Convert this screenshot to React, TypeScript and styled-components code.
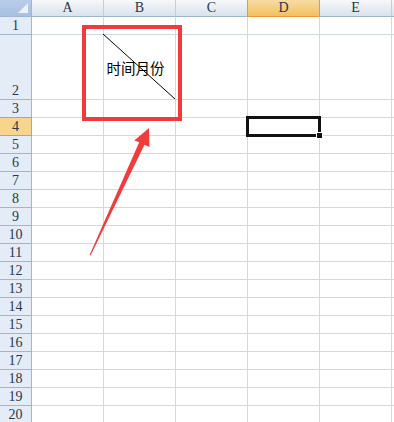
import React from "react";
import styled, { createGlobalStyle } from "styled-components";

const GlobalStyle = createGlobalStyle`
  html, body {
    margin: 0;
    padding: 0;
    background: #ffffff;
    overflow: hidden;
  }
`;

// F is only a sliver at the right edge, so its label is not drawn
const COLUMNS = ["A", "B", "C", "D", "E", "F"];
const ROW_HEIGHTS = [18, 65, ...Array(18).fill(18)];

const Sheet = styled.div`
  position: relative;
  display: grid;
  grid-template-columns: 32px repeat(6, 72px);
  grid-template-rows: 17px ${ROW_HEIGHTS.map((h) => `${h}px`).join(" ")};
  width: 394px;
  height: 422px;
  overflow: hidden;
  font-family: "Liberation Serif", "Times New Roman", serif;
  font-size: 14px;
  color: #27384a;
`;

const Corner = styled.div`
  position: relative;
  box-sizing: border-box;
  background: linear-gradient(#b9cde8, #a8c0e2);
  border-right: 1px solid #9eb6ce;
  border-bottom: 1px solid #9eb6ce;

  &::after {
    content: "";
    position: absolute;
    right: 3px;
    bottom: 3px;
    width: 0;
    height: 0;
    border-left: 10px solid transparent;
    border-bottom: 10px solid #eef2f8;
  }
`;

const ColHeader = styled.div<{ $active?: boolean }>`
  box-sizing: border-box;
  display: flex;
  align-items: flex-end;
  justify-content: center;
  padding-bottom: 1px;
  line-height: 14px;
  background: ${(p) =>
    p.$active
      ? "linear-gradient(#f9dba4, #f1c15f)"
      : "linear-gradient(#f6f8fb, #dae2ec)"};
  border-right: 1px solid ${(p) => (p.$active ? "#f29536" : "#c2cfdf")};
  border-left: ${(p) => (p.$active ? "1px solid #f29536" : "none")};
  border-bottom: 1px solid ${(p) => (p.$active ? "#f29536" : "#9eb6ce")};
  margin-left: ${(p) => (p.$active ? "-1px" : "0")};
`;

const RowHeader = styled.div<{ $active?: boolean }>`
  box-sizing: border-box;
  display: flex;
  align-items: flex-end;
  justify-content: center;
  padding-bottom: 1px;
  line-height: 14px;
  background: ${(p) => (p.$active ? "#f8d48c" : "#e4ecf7")};
  border-right: 1px solid ${(p) => (p.$active ? "#f29536" : "#9eb6ce")};
  border-bottom: 1px solid ${(p) => (p.$active ? "#f29536" : "#9eb6ce")};
  border-top: ${(p) => (p.$active ? "1px solid #f29536" : "none")};
  margin-top: ${(p) => (p.$active ? "-1px" : "0")};
`;

const Cell = styled.div`
  position: relative;
  box-sizing: border-box;
  border-right: 1px solid #d0d7e5;
  border-bottom: 1px solid #d0d7e5;
`;

const SplitCell = styled(Cell)`
  display: flex;
  align-items: center;
  justify-content: center;
  padding-right: 8px;
  font-family: "Noto Sans CJK SC", "Liberation Sans", sans-serif;
  font-size: 14.5px;
  color: #000000;
`;

const Diagonal = styled.svg`
  position: absolute;
  left: -1px;
  top: -1px;
  width: calc(100% + 1px);
  height: calc(100% + 1px);
  pointer-events: none;
`;

const CellText = styled.span`
  position: relative;
`;

const Callout = styled.div`
  position: absolute;
  left: 82px;
  top: 25px;
  width: 100px;
  height: 96px;
  box-sizing: border-box;
  border: 4px solid #f13a3a;
  pointer-events: none;
`;

const Selection = styled.div`
  position: absolute;
  left: 246px;
  top: 116px;
  width: 75px;
  height: 21px;
  box-sizing: border-box;
  border: 3px solid #111111;
  pointer-events: none;

  &::after {
    content: "";
    position: absolute;
    right: -4px;
    bottom: -4px;
    width: 5px;
    height: 5px;
    background: #111111;
    box-shadow: 0 0 0 1px #ffffff;
  }
`;

const ArrowLayer = styled.svg`
  position: absolute;
  left: 0;
  top: 0;
  width: 394px;
  height: 422px;
  pointer-events: none;
`;

export default function App() {
  return (
    <>
      <GlobalStyle />
      <Sheet>
        <Corner />
        {COLUMNS.map((c) => (
          <ColHeader key={c} $active={c === "D"}>
            {c === "F" ? null : c}
          </ColHeader>
        ))}
        {ROW_HEIGHTS.map((_, i) => {
          const row = i + 1;
          return (
            <React.Fragment key={row}>
              <RowHeader $active={row === 4}>{row}</RowHeader>
              {COLUMNS.map((c) =>
                row === 2 && c === "B" ? (
                  <SplitCell key={c}>
                    <Diagonal viewBox="0 0 72 66" preserveAspectRatio="none">
                      <line x1="0" y1="0" x2="72" y2="66" stroke="#000" strokeWidth="1" />
                    </Diagonal>
                    <CellText>时间月份</CellText>
                  </SplitCell>
                ) : (
                  <Cell key={c} />
                )
              )}
            </React.Fragment>
          );
        })}
        <Callout />
        <Selection />
        <ArrowLayer viewBox="0 0 394 422">
          <polygon
            points="149,128 149.5,147 144.5,144.8 90.6,255.5 89.6,255 139.2,142.2 134.3,140.5"
            fill="#f23c3c"
          />
        </ArrowLayer>
      </Sheet>
    </>
  );
}
